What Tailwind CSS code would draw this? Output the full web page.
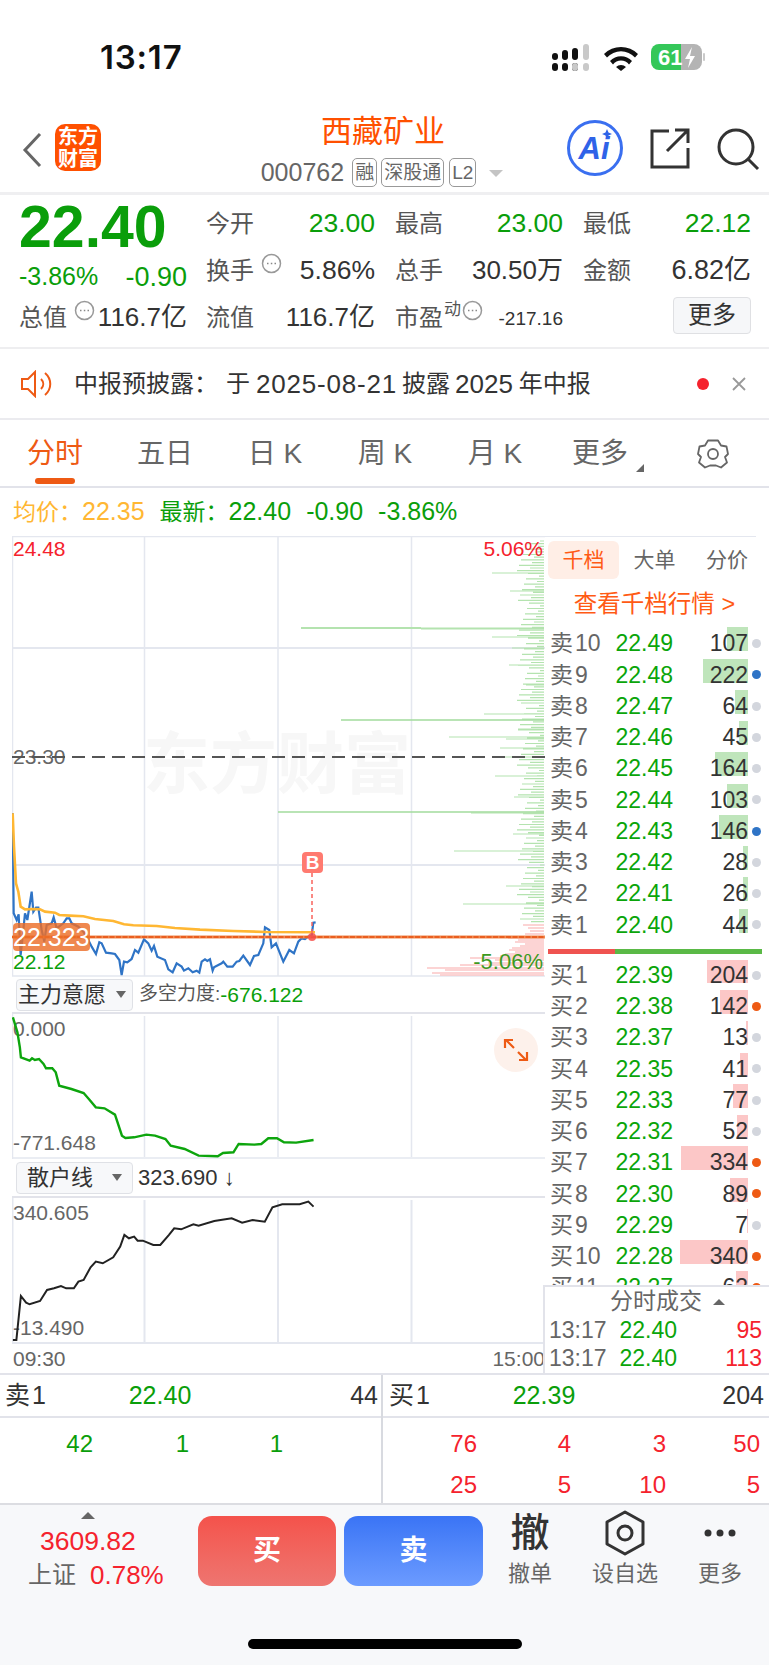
<!DOCTYPE html>
<html lang="zh-CN">
<head>
  <meta charset="UTF-8" />
  <meta name="viewport" content="width=device-width, initial-scale=1.0" />
  <title>西藏矿业</title>
  <script src="https://cdn.jsdelivr.net/npm/@tailwindcss/browser@4"></script>
</head>
<body class="bg-white w-[769px] h-[1665px] overflow-hidden text-[#333] font-['Liberation_Sans','Noto_Sans_CJK_SC',sans-serif]">

  <!-- status bar -->
  <div class="h-[108px] flex items-start relative">
    <span class="absolute left-[100px] top-[39px] text-[33px] leading-[36px] font-semibold text-[#111] font-['Inter',sans-serif] tracking-[0.8px]">13:17</span>
    <svg class="absolute left-[550px] top-[42px]" width="156" height="30" viewBox="550 42 156 30">
      <g fill="#111">
        <rect x="552" y="53" width="6" height="7" rx="3" /><rect x="552" y="63" width="6" height="8" rx="3" />
        <rect x="562" y="50" width="6" height="10" rx="3" /><rect x="562" y="63" width="6" height="8" rx="3" />
        <rect x="572" y="48" width="6" height="12" rx="3" /><rect x="572" y="63" width="6" height="8" rx="3" />
      </g>
      <rect x="572" y="63" width="6" height="8" rx="3" fill="#c9c9c9" />
      <rect x="583" y="44" width="6" height="16" rx="3" fill="#c9c9c9" /><rect x="583" y="63" width="6" height="8" rx="3" fill="#c9c9c9" />
      <path d="M604 54a24 24 0 0 1 34 0l-3 3.500a19 19 0 0 0-28 0zM610 61a15 15 0 0 1 22 0l-3 3.500a10 10 0 0 0-16 0zM616 67a7 7 0 0 1 10 0l-5 4z" fill="#111" />
      <path d="M659 44h22v26h-22a8 8 0 0 1-8-8v-10a8 8 0 0 1 8-8z" fill="#34c759" />
      <path d="M681 44h13a8 8 0 0 1 8 8v10a8 8 0 0 1-8 8h-13z" fill="#b4b4b4" />
      <rect x="703" y="53" width="2" height="8" rx="1" fill="#c9c9c9" />
      <text x="658" y="65" font-size="22" font-weight="700" fill="#fff">61</text>
      <path d="M692 47l-7 12h5l-2 9 7-12h-5z" fill="#fff" />
    </svg>
  </div>

  <!-- header -->
  <div class="h-[84px] flex">
    <div class="w-[233px] flex pl-[21px] pt-[16px]">
      <svg width="22" height="38" viewBox="0 0 22 38" class="mt-[7px]"><path d="M19 3 L4 19 L19 35" fill="none" stroke="#666" stroke-width="3" /></svg>
      <div class="ml-[12px] w-[46px] h-[47px] rounded-[10px] bg-[#ff5000] text-white font-bold text-[20px] leading-[22px] flex flex-col items-center justify-center">
        <span>东方</span><span>财富</span>
      </div>
    </div>
    <div class="w-[300px] flex flex-col items-center">
      <div class="text-[31px] leading-[40px] text-[#ff5000] mt-[4px]">西藏矿业</div>
      <div class="flex items-center mt-[6px] text-[#666] pr-[2px]">
        <span class="text-[25px] leading-[29px] mr-[8px]">000762</span>
        <span class="h-[29px] px-[2px] border border-[#999] rounded-[5px] text-[19px] leading-[27px]">融</span>
        <span class="h-[29px] px-[2px] ml-[4px] border border-[#999] rounded-[5px] text-[19px] leading-[27px]">深股通</span>
        <span class="h-[29px] px-[2px] ml-[5px] border border-[#999] rounded-[5px] text-[19px] leading-[27px]">L2</span>
        <span class="ml-[13px] mt-[2px] w-0 h-0 border-x-[7px] border-x-transparent border-t-[7px] border-t-[#c4c4c4]"></span>
      </div>
    </div>
    <div class="flex-1 flex items-start pl-[34px] pt-[12px]">
      <svg width="56" height="56" viewBox="0 0 56 56">
        <circle cx="28" cy="28" r="26.500" fill="none" stroke="#3a6ff0" stroke-width="3" />
        <text x="27" y="39" font-size="31" font-weight="700" font-style="italic" fill="#2f63e8" text-anchor="middle">Ai</text>
        <path d="M40 9l1.500 3.500 3.500 1.500-3.500 1.500-1.500 3.500-1.500-3.500-3.500-1.500 3.500-1.500z" fill="#2f63e8" />
      </svg>
      <svg class="ml-[26px] mt-[8px]" width="42" height="42" viewBox="0 0 42 42"><path d="M20 3H3V39H39V20M18 23L39 2M26 2H39V15" fill="none" stroke="#333" stroke-width="3" /></svg>
      <svg class="ml-[25px] mt-[7px]" width="44" height="44" viewBox="0 0 44 44"><circle cx="20" cy="20" r="17" fill="none" stroke="#333" stroke-width="3" /><path d="M32 32L42 42" stroke="#333" stroke-width="3" /></svg>
    </div>
  </div>
  <div class="h-[3px] bg-[#efeff1]"></div>

  <!-- quote block -->
  <div class="h-[154px] border-b-2 border-[#eeeef0] flex pl-[19px] pt-[5px] text-[#555]">
    <div class="w-[168px] shrink-0">
      <div class="h-[47px] flex items-center text-[59px] leading-none font-bold text-[#0a9e0a] mt-[4px] -mb-[4px]">22.40</div>
      <div class="h-[47px] flex items-center justify-between text-[#0a9e0a] pt-[13px]">
        <span class="text-[25px]">-3.86%</span><span class="text-[27px]">-0.90</span>
      </div>
      <div class="h-[47px] flex items-center justify-between">
        <span class="flex items-center text-[24px]">总值<svg class="ml-[7px] -mt-[14px]" width="21" height="21" viewBox="0 0 21 21"><circle cx="10.5" cy="10.5" r="9" fill="none" stroke="#999" stroke-width="1.5" /><path d="M6 10.5h1.5M9.8 10.5h1.5M13.5 10.5h1.5" stroke="#888" stroke-width="1.5" /></svg></span>
        <span class="text-[26px] text-[#333]">116.7亿</span>
      </div>
    </div>
    <div class="ml-[19px] w-[545px] grid grid-cols-[169px_168px_168px] gap-x-[20px] grid-rows-[47px_47px_47px]">
      <div class="flex items-center justify-between"><span class="text-[24px]">今开</span><span class="text-[26.5px] text-[#0a9e0a]">23.00</span></div>
      <div class="flex items-center justify-between"><span class="text-[24px]">最高</span><span class="text-[26.5px] text-[#0a9e0a]">23.00</span></div>
      <div class="flex items-center justify-between"><span class="text-[24px]">最低</span><span class="text-[26.5px] text-[#0a9e0a]">22.12</span></div>
      <div class="flex items-center justify-between">
        <span class="flex items-center text-[24px]">换手<svg class="ml-[7px] -mt-[14px]" width="21" height="21" viewBox="0 0 21 21"><circle cx="10.5" cy="10.5" r="9" fill="none" stroke="#999" stroke-width="1.5" /><path d="M6 10.5h1.5M9.8 10.5h1.5M13.5 10.5h1.5" stroke="#888" stroke-width="1.5" /></svg></span>
        <span class="text-[26.5px] text-[#333]">5.86%</span>
      </div>
      <div class="flex items-center justify-between"><span class="text-[24px]">总手</span><span class="text-[26px] text-[#333]">30.50万</span></div>
      <div class="flex items-center justify-between"><span class="text-[24px]">金额</span><span class="text-[27px] text-[#333]">6.82亿</span></div>
      <div class="flex items-center justify-between"><span class="text-[24px]">流值</span><span class="text-[26px] text-[#333]">116.7亿</span></div>
      <div class="flex items-center justify-between">
        <span class="flex items-center text-[24px]">市盈<span class="text-[17px] leading-none -mt-[16px] ml-[1px]">动</span><svg class="ml-[1px] -mt-[14px]" width="21" height="21" viewBox="0 0 21 21"><circle cx="10.5" cy="10.5" r="9" fill="none" stroke="#999" stroke-width="1.5" /><path d="M6 10.5h1.5M9.8 10.5h1.5M13.5 10.5h1.5" stroke="#888" stroke-width="1.5" /></svg></span>
        <span class="text-[19px] text-[#333] mt-[4px]">-217.16</span>
      </div>
      <div class="flex items-center justify-end">
        <span class="w-[78px] h-[37px] -mt-[5px] bg-[#f6f7f9] border border-[#dfe0e3] rounded-[4px] flex items-center justify-center text-[24px] text-[#333]">更多</span>
      </div>
    </div>
  </div>

  <!-- notice -->
  <div class="h-[71px] border-b-2 border-[#ebebef] flex items-center pl-[20px] pr-[22px] text-[24px] leading-none text-[#333]">
    <svg width="34" height="28" viewBox="0 0 34 28"><path d="M2 9H8L15 2V26L8 19H2ZM21 9C24 12 24 16 21 19M25 3C32 9 32 19 25 25" fill="none" stroke="#ee5a14" stroke-width="2" /></svg>
    <span class="ml-[20px] w-[152px]">中报预披露：</span>
    <span>于</span>
    <span class="ml-[6px] text-[26px] tracking-[0.8px]">2025-08-21</span>
    <span class="ml-[5px]">披露</span>
    <span class="ml-[5px] text-[26px]">2025</span>
    <span class="ml-[6px]">年中报</span>
    <span class="ml-auto w-[12px] h-[12px] rounded-full bg-[#f5222d]"></span>
    <svg class="ml-[22px]" width="16" height="16" viewBox="0 0 16 16"><path d="M2 2L14 14M14 2L2 14" stroke="#999" stroke-width="1.8" /></svg>
  </div>

  <!-- period tabs -->
  <div class="h-[68px] border-b-2 border-[#e2e3ea] flex items-start pt-[14px] text-[28px] leading-[40px] text-[#666]">
    <span class="w-[110px] text-center text-[#ee5a14] relative">分时<i class="absolute left-[35px] top-[44px] w-[40px] h-[6px] rounded-[3px] bg-[#ee5a14]"></i></span>
    <span class="w-[110px] text-center">五日</span>
    <span class="w-[110px] text-center">日 K</span>
    <span class="w-[110px] text-center">周 K</span>
    <span class="w-[110px] text-center">月 K</span>
    <span class="w-[110px] pr-[10px] text-center relative">更多<i class="absolute left-[86px] top-[30px] w-0 h-0 border-l-[8px] border-l-transparent border-b-[8px] border-b-[#666]"></i></span>
    <svg class="ml-[37px] mt-[4px]" width="32" height="32" viewBox="0 0 32 32"><path d="M11 2.5H21L24 7.5L29.5 8.5L31 16L28 19L30 24.5L24 29.5L19 27.5H13L8 29.5L2 24.5L4 19L1 16L2.5 8.5L8 7.5Z" fill="none" stroke="#666" stroke-width="1.8" stroke-linejoin="round" /><circle cx="16" cy="16" r="5" fill="none" stroke="#666" stroke-width="1.8" /></svg>
  </div>

  <!-- last price line -->
  <div class="h-[48px] flex items-center pl-[13px] pb-[1px] text-[23px] text-[#0a9e0a]">
    <span class="text-[#ffb733]">均价：<span class="text-[25px]">22.35</span></span>
    <span class="ml-[15px]">最新：<span class="text-[25px]">22.40</span></span>
    <span class="ml-[15px] text-[25px]">-0.90</span>
    <span class="ml-[15px] text-[25px]">-3.86%</span>
  </div>

  <div class="h-[837px] flex">
    <!-- charts -->
    <div class="ml-[12px] w-[533px] shrink-0 flex flex-col">
      <svg class="block shrink-0" width="533" height="441" viewBox="12 536 533 441" font-size="21">
        <g stroke="#e4e7ef" fill="none">
          <path d="M12 536.5H545M12.5 536V976M144.5 536V976M278 536V976M411.5 536V976M12 976H545" stroke-width="1.5" />
          <path d="M12 648H545M12 865H545" stroke-width="2" />
        </g>
        <text x="143" y="788" font-size="67" font-weight="700" fill="#f7f7f7">东方财富</text>
        <path id="askDepth" d="" stroke="#b4e3af" stroke-width="1.2" fill="none" />
        <path id="bidDepth" d="" stroke="#fbc6c6" stroke-width="1.6" fill="none" />
        <path d="M301 628H421M421 628.5H544" stroke="#b4e3af" stroke-width="2" fill="none" />
        <path d="M341 720H544M278 812H544" stroke="#a3dc9d" stroke-width="1.5" fill="none" />
        <text x="13" y="556" fill="#f5222d">24.48</text>
        <text x="543" y="556" fill="#f5222d" text-anchor="end">5.06%</text>
        <text x="13" y="764" fill="#666">23.30</text>
        <path d="M12 757H545" stroke="#555" stroke-width="2" stroke-dasharray="13 7" fill="none" />
        <text x="13" y="969" fill="#0a9e0a">22.12</text>
        <text x="543" y="969" font-size="22" fill="#3d9a1f" text-anchor="end">-5.06%</text>
        <polyline transform="translate(0 780) scale(.3333)" vector-effect="non-scaling-stroke" fill="none" stroke="#2f74c6" stroke-width="2.2" points="38,100 41,400 50,420 56,403 58,450 62,525 68,470 75,400 82,420 95,335 100,395 108,383 115,383 125,450 133,485 140,435 155,430 161,412 170,445 190,430 200,415 208,415 215,430 235,440 250,455 265,480 275,500 288,522 298,487 305,490 318,518 335,520 345,522 358,540 365,585 372,545 382,547 395,537 405,510 415,518 432,478 445,490 455,512 462,498 472,530 495,540 505,568 518,577 530,550 545,560 552,572 565,565 578,577 590,572 598,578 605,545 615,538 622,543 630,538 638,572 642,562 665,550 670,545 682,560 698,560 710,545 718,543 730,527 750,555 762,528 775,525 790,490 795,442 808,450 815,502 828,490 850,545 868,510 882,520 895,485 905,475 915,477 925,470 935,468 940,428 947,427" />
        <polyline transform="translate(0 780) scale(.3333)" vector-effect="non-scaling-stroke" fill="none" stroke="#ffb733" stroke-width="2.6" points="38,100 42,200 48,310 55,335 62,380 75,388 100,387 120,388 135,395 165,398 178,405 210,407 250,409 285,417 340,423 372,433 400,436 470,438 525,444 600,449 700,453 800,456 945,457" />
        <path d="M12 937H545" stroke="#f08a50" stroke-width="3" fill="none" />
        <path d="M12 937H545" stroke="#e8500f" stroke-width="1.5" stroke-dasharray="5 1.5" fill="none" />
        <path d="M312 873V937" stroke="#f9635c" stroke-width="1.5" stroke-dasharray="4 3" fill="none" />
        <circle cx="312" cy="937" r="4" fill="#f4504a" opacity=".85" />
        <rect x="302" y="852" width="21" height="21" rx="4" fill="#ff7a70" />
        <text x="312.5" y="869" font-size="19" font-weight="700" fill="#fff" text-anchor="middle">B</text>
        <rect x="13" y="923" width="77" height="28" rx="4" fill="#eb6e28" fill-opacity=".82" />
        <text x="13" y="946" font-size="25" fill="#fff">22.323</text>
      </svg>

      <div class="h-[37px] shrink-0 flex items-center pl-[4px] border-b-2 border-[#e2e3ea]">
        <span class="w-[117px] h-[32px] bg-[#f7f8fa] border border-[#dfe1e6] rounded-[4px] flex items-center pl-[1px] text-[22px] text-[#333]">主力意愿<i class="ml-[10px] w-0 h-0 border-x-[5px] border-x-transparent border-t-[7px] border-t-[#666]"></i></span>
        <span class="ml-[6px] text-[19px] text-[#555]">多空力度:</span><span class="text-[21px] text-[#0a9e0a]">-676.122</span>
      </div>
      <svg class="block shrink-0" width="533" height="145" viewBox="12 1015 533 145" font-size="21">
        <path d="M144.5 1017V1158M278 1017V1158M411.5 1017V1158M12.5 1015V1160M12 1159H545" stroke="#e4e7ef" stroke-width="1.5" fill="none" />
        <text x="13" y="1037" fill="#666">0.000</text>
        <text x="13" y="1151" fill="#666">-771.648</text>
        <polyline transform="translate(0 970) scale(.3484 .3333)" vector-effect="non-scaling-stroke" fill="none" stroke="#0da50d" stroke-width="2.4" points="37,145 50,190 57,235 60,265 85,275 92,268 100,273 112,270 125,285 132,298 150,298 160,310 170,350 205,360 240,372 255,390 275,415 300,418 330,437 350,500 360,507 385,505 420,497 445,500 475,510 490,530 530,540 570,560 625,562 640,552 670,550 685,525 730,527 750,525 770,508 795,508 815,520 850,521 900,513" />
        <circle cx="516" cy="1051" r="22" fill="#fdf1eb" />
        <path d="M514 1049L506 1041M505 1049V1041H513M518 1053L526 1061M527 1053V1061H519" stroke="#ee5a14" stroke-width="2.2" fill="none" />
      </svg>

      <div class="h-[39px] shrink-0 flex items-center pl-[4px] border-b-2 border-[#e2e3ea]">
        <span class="w-[117px] h-[32px] bg-[#f7f8fa] border border-[#dfe1e6] rounded-[4px] flex items-center pl-[10px] text-[22px] text-[#333]">散户线<i class="ml-[19px] w-0 h-0 border-x-[5px] border-x-transparent border-t-[7px] border-t-[#666]"></i></span>
        <span class="ml-[5px] text-[22px] text-[#333]">323.690 ↓</span>
      </div>
      <svg class="block shrink-0" width="533" height="146" viewBox="12 1198 533 146" font-size="21">
        <path d="M144.5 1200V1342M278 1200V1342M411.5 1200V1342M12.5 1198V1343M12 1343H545" stroke="#e4e7ef" stroke-width="2" fill="none" />
        <text x="13" y="1220" fill="#666">340.605</text>
        <text x="13" y="1335" fill="#666">-13.490</text>
        <polyline transform="translate(0 970) scale(.3484 .3333)" vector-effect="non-scaling-stroke" fill="none" stroke="#222" stroke-width="2" points="37,1110 47,1110 60,978 75,998 85,1003 115,993 135,960 155,955 175,948 190,955 212,955 225,935 240,930 260,892 275,875 295,880 325,862 345,830 357,795 370,805 385,800 395,812 410,812 440,825 460,825 485,795 500,775 520,778 555,763 570,767 615,753 665,745 695,758 725,750 760,755 782,712 810,703 860,703 885,695 900,710" />
      </svg>
      <div class="h-[29px] shrink-0 flex items-center justify-between pl-[1px] text-[21px] text-[#666]"><span>09:30</span><span>15:00</span></div>
    </div>

    <!-- order book -->
    <div class="w-[224px] text-[23px]">
      <div class="h-[92px]">
        <div class="h-px mr-[13px] bg-[#e4e7ef]"></div>
        <div class="flex items-center h-[38px] mt-[4px] text-[21px] text-[#666]">
          <span class="ml-[3px] w-[71px] h-[38px] rounded-[6px] bg-[#ffeee6] text-[#ff5a14] flex items-center justify-center">千档</span>
          <span class="w-[71px] text-center">大单</span>
          <span class="w-[74px] text-center">分价</span>
        </div>
        <div class="mt-[9px] text-center text-[23.5px] leading-[32px] text-[#ff5a14] pr-[5px]">查看千档行情 &gt;</div>
      </div>

      <div class="flex h-[31.25px] items-center pl-[5px]"><span class="w-[60px] text-[#666]">卖&#8202;10</span><span class="w-[63px] text-right text-[#0aa50a]">22.49</span><span class="relative w-[75px] text-right text-[#333]"><i class="absolute right-0 top-[1px] h-[24px] w-[21px] bg-[#bfe5bb]"></i><span class="relative">107</span></span><i class="ml-[4px] w-[9px] h-[9px] rounded-full bg-[#d3d6dd]"></i></div>
      <div class="flex h-[31.25px] items-center pl-[5px]"><span class="w-[60px] text-[#666]">卖&#8202;9</span><span class="w-[63px] text-right text-[#0aa50a]">22.48</span><span class="relative w-[75px] text-right text-[#333]"><i class="absolute right-0 top-[1px] h-[24px] w-[45px] bg-[#bfe5bb]"></i><span class="relative">222</span></span><i class="ml-[4px] w-[9px] h-[9px] rounded-full bg-[#2f74c6]"></i></div>
      <div class="flex h-[31.25px] items-center pl-[5px]"><span class="w-[60px] text-[#666]">卖&#8202;8</span><span class="w-[63px] text-right text-[#0aa50a]">22.47</span><span class="relative w-[75px] text-right text-[#333]"><i class="absolute right-0 top-[1px] h-[24px] w-[13px] bg-[#bfe5bb]"></i><span class="relative">64</span></span><i class="ml-[4px] w-[9px] h-[9px] rounded-full bg-[#d3d6dd]"></i></div>
      <div class="flex h-[31.25px] items-center pl-[5px]"><span class="w-[60px] text-[#666]">卖&#8202;7</span><span class="w-[63px] text-right text-[#0aa50a]">22.46</span><span class="relative w-[75px] text-right text-[#333]"><i class="absolute right-0 top-[1px] h-[24px] w-[9px] bg-[#bfe5bb]"></i><span class="relative">45</span></span><i class="ml-[4px] w-[9px] h-[9px] rounded-full bg-[#d3d6dd]"></i></div>
      <div class="flex h-[31.25px] items-center pl-[5px]"><span class="w-[60px] text-[#666]">卖&#8202;6</span><span class="w-[63px] text-right text-[#0aa50a]">22.45</span><span class="relative w-[75px] text-right text-[#333]"><i class="absolute right-0 top-[1px] h-[24px] w-[33px] bg-[#bfe5bb]"></i><span class="relative">164</span></span><i class="ml-[4px] w-[9px] h-[9px] rounded-full bg-[#d3d6dd]"></i></div>
      <div class="flex h-[31.25px] items-center pl-[5px]"><span class="w-[60px] text-[#666]">卖&#8202;5</span><span class="w-[63px] text-right text-[#0aa50a]">22.44</span><span class="relative w-[75px] text-right text-[#333]"><i class="absolute right-0 top-[1px] h-[24px] w-[21px] bg-[#bfe5bb]"></i><span class="relative">103</span></span><i class="ml-[4px] w-[9px] h-[9px] rounded-full bg-[#d3d6dd]"></i></div>
      <div class="flex h-[31.25px] items-center pl-[5px]"><span class="w-[60px] text-[#666]">卖&#8202;4</span><span class="w-[63px] text-right text-[#0aa50a]">22.43</span><span class="relative w-[75px] text-right text-[#333]"><i class="absolute right-0 top-[1px] h-[24px] w-[29px] bg-[#bfe5bb]"></i><span class="relative">146</span></span><i class="ml-[4px] w-[9px] h-[9px] rounded-full bg-[#2f74c6]"></i></div>
      <div class="flex h-[31.25px] items-center pl-[5px]"><span class="w-[60px] text-[#666]">卖&#8202;3</span><span class="w-[63px] text-right text-[#0aa50a]">22.42</span><span class="relative w-[75px] text-right text-[#333]"><i class="absolute right-0 top-[1px] h-[24px] w-[5px] bg-[#bfe5bb]"></i><span class="relative">28</span></span><i class="ml-[4px] w-[9px] h-[9px] rounded-full bg-[#d3d6dd]"></i></div>
      <div class="flex h-[31.25px] items-center pl-[5px]"><span class="w-[60px] text-[#666]">卖&#8202;2</span><span class="w-[63px] text-right text-[#0aa50a]">22.41</span><span class="relative w-[75px] text-right text-[#333]"><i class="absolute right-0 top-[1px] h-[24px] w-[5px] bg-[#bfe5bb]"></i><span class="relative">26</span></span><i class="ml-[4px] w-[9px] h-[9px] rounded-full bg-[#d3d6dd]"></i></div>
      <div class="flex h-[31.25px] items-center pl-[5px]"><span class="w-[60px] text-[#666]">卖&#8202;1</span><span class="w-[63px] text-right text-[#0aa50a]">22.40</span><span class="relative w-[75px] text-right text-[#333]"><i class="absolute right-0 top-[1px] h-[24px] w-[9px] bg-[#bfe5bb]"></i><span class="relative">44</span></span><i class="ml-[4px] w-[9px] h-[9px] rounded-full bg-[#d3d6dd]"></i></div>

      <div class="ml-[3px] mr-[7px] h-[5px] mt-[8px] mb-[6px] flex"><i class="w-[67px] bg-[#ef5350]"></i><i class="flex-1 bg-[#5ab946]"></i></div>

      <div class="h-[325px] overflow-hidden">
        <div class="flex h-[31.25px] items-center pl-[5px]"><span class="w-[60px] text-[#666]">买&#8202;1</span><span class="w-[63px] text-right text-[#0aa50a]">22.39</span><span class="relative w-[75px] text-right text-[#333]"><i class="absolute right-0 top-[1px] h-[24px] w-[41px] bg-[#fcc7c7]"></i><span class="relative">204</span></span><i class="ml-[4px] w-[9px] h-[9px] rounded-full bg-[#d3d6dd]"></i></div>
        <div class="flex h-[31.25px] items-center pl-[5px]"><span class="w-[60px] text-[#666]">买&#8202;2</span><span class="w-[63px] text-right text-[#0aa50a]">22.38</span><span class="relative w-[75px] text-right text-[#333]"><i class="absolute right-0 top-[1px] h-[24px] w-[28px] bg-[#fcc7c7]"></i><span class="relative">142</span></span><i class="ml-[4px] w-[9px] h-[9px] rounded-full bg-[#ee5a14]"></i></div>
        <div class="flex h-[31.25px] items-center pl-[5px]"><span class="w-[60px] text-[#666]">买&#8202;3</span><span class="w-[63px] text-right text-[#0aa50a]">22.37</span><span class="relative w-[75px] text-right text-[#333]"><i class="absolute right-0 top-[1px] h-[24px] w-[2px] bg-[#fcc7c7]"></i><span class="relative">13</span></span><i class="ml-[4px] w-[9px] h-[9px] rounded-full bg-[#d3d6dd]"></i></div>
        <div class="flex h-[31.25px] items-center pl-[5px]"><span class="w-[60px] text-[#666]">买&#8202;4</span><span class="w-[63px] text-right text-[#0aa50a]">22.35</span><span class="relative w-[75px] text-right text-[#333]"><i class="absolute right-0 top-[1px] h-[24px] w-[8px] bg-[#fcc7c7]"></i><span class="relative">41</span></span><i class="ml-[4px] w-[9px] h-[9px] rounded-full bg-[#d3d6dd]"></i></div>
        <div class="flex h-[31.25px] items-center pl-[5px]"><span class="w-[60px] text-[#666]">买&#8202;5</span><span class="w-[63px] text-right text-[#0aa50a]">22.33</span><span class="relative w-[75px] text-right text-[#333]"><i class="absolute right-0 top-[1px] h-[24px] w-[15px] bg-[#fcc7c7]"></i><span class="relative">77</span></span><i class="ml-[4px] w-[9px] h-[9px] rounded-full bg-[#d3d6dd]"></i></div>
        <div class="flex h-[31.25px] items-center pl-[5px]"><span class="w-[60px] text-[#666]">买&#8202;6</span><span class="w-[63px] text-right text-[#0aa50a]">22.32</span><span class="relative w-[75px] text-right text-[#333]"><i class="absolute right-0 top-[1px] h-[24px] w-[11px] bg-[#fcc7c7]"></i><span class="relative">52</span></span><i class="ml-[4px] w-[9px] h-[9px] rounded-full bg-[#d3d6dd]"></i></div>
        <div class="flex h-[31.25px] items-center pl-[5px]"><span class="w-[60px] text-[#666]">买&#8202;7</span><span class="w-[63px] text-right text-[#0aa50a]">22.31</span><span class="relative w-[75px] text-right text-[#333]"><i class="absolute right-0 top-[1px] h-[24px] w-[67px] bg-[#fcc7c7]"></i><span class="relative">334</span></span><i class="ml-[4px] w-[9px] h-[9px] rounded-full bg-[#ee5a14]"></i></div>
        <div class="flex h-[31.25px] items-center pl-[5px]"><span class="w-[60px] text-[#666]">买&#8202;8</span><span class="w-[63px] text-right text-[#0aa50a]">22.30</span><span class="relative w-[75px] text-right text-[#333]"><i class="absolute right-0 top-[1px] h-[24px] w-[18px] bg-[#fcc7c7]"></i><span class="relative">89</span></span><i class="ml-[4px] w-[9px] h-[9px] rounded-full bg-[#ee5a14]"></i></div>
        <div class="flex h-[31.25px] items-center pl-[5px]"><span class="w-[60px] text-[#666]">买&#8202;9</span><span class="w-[63px] text-right text-[#0aa50a]">22.29</span><span class="relative w-[75px] text-right text-[#333]"><i class="absolute right-0 top-[1px] h-[24px] w-[1px] bg-[#fcc7c7]"></i><span class="relative">7</span></span><i class="ml-[4px] w-[9px] h-[9px] rounded-full bg-[#d3d6dd]"></i></div>
        <div class="flex h-[31.25px] items-center pl-[5px]"><span class="w-[60px] text-[#666]">买&#8202;10</span><span class="w-[63px] text-right text-[#0aa50a]">22.28</span><span class="relative w-[75px] text-right text-[#333]"><i class="absolute right-0 top-[1px] h-[24px] w-[68px] bg-[#fcc7c7]"></i><span class="relative">340</span></span><i class="ml-[4px] w-[9px] h-[9px] rounded-full bg-[#ee5a14]"></i></div>
        <div class="flex h-[31.25px] items-center pl-[5px]"><span class="w-[60px] text-[#666]">买&#8202;11</span><span class="w-[63px] text-right text-[#0aa50a]">22.27</span><span class="relative w-[75px] text-right text-[#333]"><i class="absolute right-0 top-[1px] h-[24px] w-[12px] bg-[#fcc7c7]"></i><span class="relative">62</span></span><i class="ml-[4px] w-[9px] h-[9px] rounded-full bg-[#ee5a14]"></i></div>
      </div>

      <div class="h-[88px] border-t-2 border-l-2 border-[#e2e3ea] -ml-[2px]">
        <div class="h-[30px] flex items-center pl-[65px] text-[23px] text-[#666]">分时成交<i class="ml-[11px] w-0 h-0 border-x-[6px] border-x-transparent border-b-[6px] border-b-[#666]"></i></div>
        <div class="flex h-[28px] items-center pl-[4px] pr-[7px]"><span class="text-[#666] w-[66px]">13:17</span><span class="w-[62px] text-right text-[#0aa50a]">22.40</span><span class="flex-1 text-right text-[#f5222d]">95</span></div>
        <div class="flex h-[28px] items-center pl-[4px] pr-[7px]"><span class="text-[#666] w-[66px]">13:17</span><span class="w-[62px] text-right text-[#0aa50a]">22.40</span><span class="flex-1 text-right text-[#f5222d]">113</span></div>
      </div>
    </div>
  </div>

  <!-- level one / tick strip -->
  <div class="border-t-2 border-[#e2e3ea] h-[130px] flex text-[24px]">
    <div class="w-[383px] border-r-2 border-[#d8dae0] shrink-0">
      <div class="h-[43px] border-b-2 border-[#e2e3ea] flex items-center pl-[5px] pr-[3px] text-[25px]">
        <span class="w-[100px] text-[#333]">卖&#8202;1</span><span class="w-[110px] text-center text-[#0a9e0a]">22.40</span><span class="flex-1 text-right text-[#333]">44</span>
      </div>
      <div class="flex h-[45px] mt-[3px] items-center text-[#0a9e0a]"><span class="w-[93px] text-right">42</span><span class="w-[96px] text-right">1</span><span class="w-[94px] text-right">1</span></div>
    </div>
    <div class="flex-1">
      <div class="h-[43px] border-b-2 border-[#e2e3ea] flex items-center pl-[6px] pr-[5px] text-[25px]">
        <span class="w-[100px] text-[#333]">买&#8202;1</span><span class="w-[110px] text-center text-[#0a9e0a]">22.39</span><span class="flex-1 text-right text-[#333]">204</span>
      </div>
      <div class="flex h-[45px] mt-[3px] items-center text-[#f5222d]"><span class="w-[94px] text-right">76</span><span class="w-[94px] text-right">4</span><span class="w-[95px] text-right">3</span><span class="w-[94px] text-right">50</span></div>
      <div class="flex h-[37px] items-center text-[#f5222d]"><span class="w-[94px] text-right">25</span><span class="w-[94px] text-right">5</span><span class="w-[95px] text-right">10</span><span class="w-[94px] text-right">5</span></div>
    </div>
  </div>

  <!-- bottom toolbar -->
  <div class="h-[162px] bg-[#f7f8fa] border-t-2 border-[#dcdde2] relative">
    <div class="flex items-start pt-[11px]">
      <div class="w-[198px] shrink-0 pl-[28px] -mt-[4px] flex flex-col">
        <i class="ml-[53px] w-0 h-0 border-x-[7px] border-x-transparent border-b-[7px] border-b-[#666]"></i>
        <span class="ml-[12px] mt-[7px] text-[26.5px] leading-[30px] text-[#f5222d]">3609.82</span>
        <span class="mt-[2px] flex items-center text-[24px] leading-[34px] text-[#666]">上证<span class="ml-[14px] text-[26px] text-[#f5222d]">0.78%</span></span>
      </div>
      <div class="w-[138px] h-[70px] rounded-[14px] bg-linear-to-b from-[#f4524b] to-[#ee7570] text-white font-bold text-[28px] flex items-center justify-center">买</div>
      <div class="w-[139px] h-[70px] ml-[8px] rounded-[14px] bg-linear-to-b from-[#3a74f5] to-[#6c9bff] text-white font-bold text-[28px] flex items-center justify-center">卖</div>
      <div class="w-[94px] flex flex-col items-center text-[#666] text-[22px]">
        <span class="h-[46px] text-[39px] leading-[46px] font-medium text-[#333] -mt-[6px]">撤</span>
        <span class="mt-[3px] leading-[30px]">撤单</span>
      </div>
      <div class="w-[96px] flex flex-col items-center text-[#666] text-[22px]">
        <svg width="42" height="46" viewBox="0 0 42 46" class="-mt-[6px]"><path d="M21 2L39 12V34L21 44L3 34V12Z" fill="none" stroke="#333" stroke-width="3" stroke-linejoin="round" /><circle cx="21" cy="23" r="7" fill="none" stroke="#333" stroke-width="3" /></svg>
        <span class="mt-[3px] leading-[30px]">设自选</span>
      </div>
      <div class="w-[94px] flex flex-col items-center text-[#666] text-[22px]">
        <svg width="36" height="46" viewBox="0 0 36 46" class="-mt-[6px]"><circle cx="6" cy="23" r="3.5" fill="#333" /><circle cx="18" cy="23" r="3.5" fill="#333" /><circle cx="30" cy="23" r="3.5" fill="#333" /></svg>
        <span class="mt-[3px] leading-[30px]">更多</span>
      </div>
    </div>
    <div class="absolute left-[248px] top-[134px] w-[274px] h-[10px] rounded-full bg-black"></div>
  </div>

  <script>
    // volume-by-price strip on the right edge of the main chart
    var longAsk = [[573,492],[591,510],[637,492],[648,512],[665,509],[685,526],[703,521],[714,484],[729,518],[737,449],[739,506],[748,500],[757,500],[776,495],[797,514],[813,471],[834,513],[851,454],[886,506],[904,463]];
    var ask = '', bid = '';
    for (var i = 0, y = 541; y < 924; i++, y += 2.7) {
      ask += 'M' + (544 - 4 - (i * 37) % 24) + ' ' + y.toFixed(1) + 'H544';
    }
    longAsk.forEach(function (r) { ask += 'M' + r[1] + ' ' + r[0] + 'H544'; });
    [[925,523],[928,528],[931,530],[934,525],[938,508],[940,518],[942,515],[944,525],[946,520],[948,512],[950,509],[952,515],[954,505],[956,500],[958,470],[960,495],[963,488],[965,460],[968,427],[970,445],[973,432],[975,440]].forEach(function (r) {
      bid += 'M' + r[1] + ' ' + r[0] + 'H544';
    });
    document.getElementById('askDepth').setAttribute('d', ask);
    document.getElementById('bidDepth').setAttribute('d', bid);
  </script>
</body>
</html>
